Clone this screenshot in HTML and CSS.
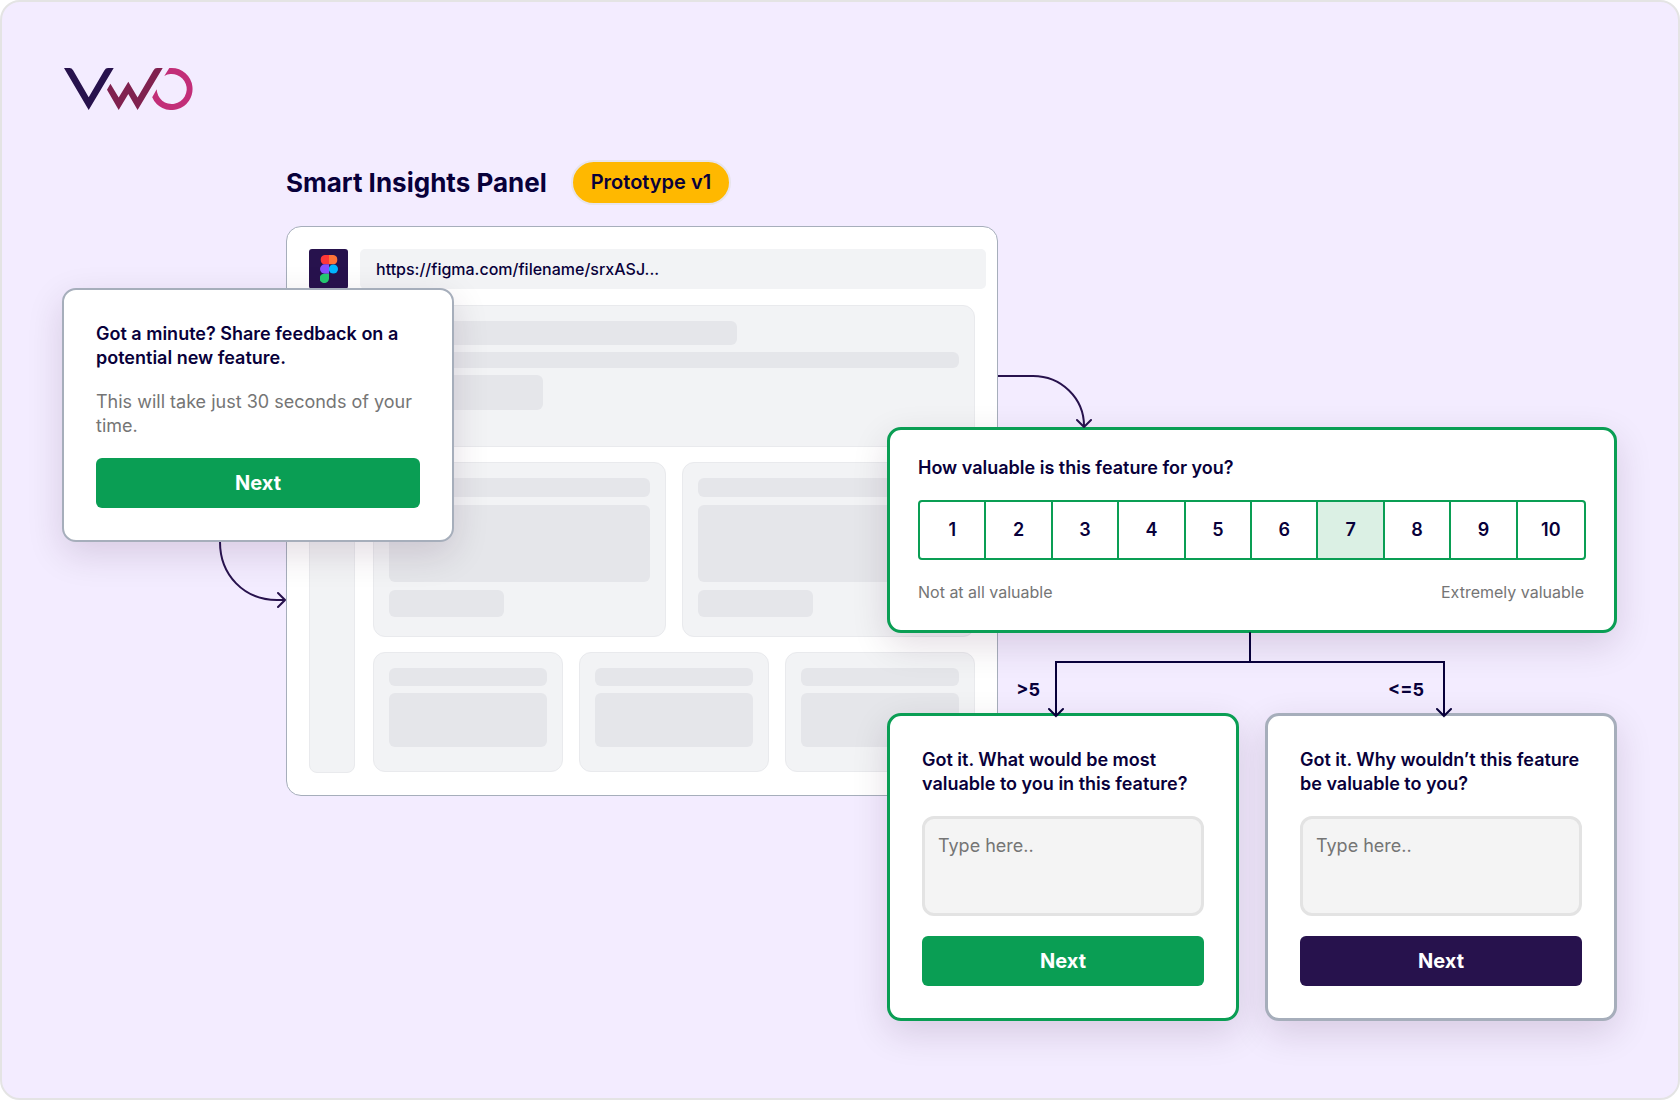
FILE: index.html
```html
<!DOCTYPE html>
<html lang="en">
<head>
    <meta charset="UTF-8">
    <meta name="viewport" content="width=device-width, initial-scale=1.0">
    <title>Smart Insights Panel</title>
    <link rel="stylesheet" href="styles.css">
</head>
<body>

    <div class="page">

        <a class="logo" href="#" aria-label="VWO">
            <svg width="129" height="42" viewBox="0 0 129 42">
                <path fill="#27124d" d="M0 0H5.5Q7.8 0 9.1 2.2L24.7 29.2 40.3 2.4Q41.7 0 44 0H49.7L24.7 41.9Z"/>
                <path fill="#80214f" d="M43 21.7L46.4 15.8 54.7 29.6 64.3 13.7 73.6 29.6 89.4 2.4Q90.8 0 93 0H98.7L73.6 41.9 64.3 25.9 54.7 41.9Z"/>
                <path fill="#c22e78" d="M105.3 0H107.7A21 21 0 1 1 88.2 29.2L92.7 21.3A15 15 0 1 0 100.3 8Z"/>
            </svg>
        </a>

        <main class="board">

            <header class="heading">
                <h1>Smart Insights Panel</h1>
                <span class="badge">Prototype v1</span>
            </header>

            <!-- Prototype preview -->
            <section class="browser">
                <div class="browser-bar">
                    <span class="figma">
                        <svg width="18" height="28" viewBox="0 0 18 28">
                            <path fill="#ff3737" d="M9 0H4.7a4.7 4.7 0 0 0 0 9.3H9z"/>
                            <path fill="#ff7237" d="M9 0h4.3a4.7 4.7 0 0 1 0 9.3H9z"/>
                            <path fill="#874fff" d="M9 9.3H4.7a4.7 4.7 0 0 0 0 9.4H9z"/>
                            <circle fill="#00b6ff" cx="13.4" cy="14" r="4.6"/>
                            <path fill="#24cb71" d="M9 18.7H4.7A4.7 4.7 0 1 0 9 23.3z"/>
                        </svg>
                    </span>
                    <a class="url" href="#">https://figma.com/filename/srxASJ...</a>
                </div>

                <div class="wireframe">
                    <div class="wire sidebar"></div>
                    <div class="content">
                        <div class="wire hero">
                            <div class="bone hero-title"></div>
                            <div class="bone hero-text"></div>
                            <div class="bone hero-button"></div>
                        </div>
                        <div class="row two">
                            <div class="wire tall">
                                <div class="bone line"></div>
                                <div class="bone block"></div>
                                <div class="bone tag"></div>
                            </div>
                            <div class="wire tall">
                                <div class="bone line"></div>
                                <div class="bone block"></div>
                                <div class="bone tag"></div>
                            </div>
                        </div>
                        <div class="row three">
                            <div class="wire short">
                                <div class="bone line"></div>
                                <div class="bone block"></div>
                            </div>
                            <div class="wire short">
                                <div class="bone line"></div>
                                <div class="bone block"></div>
                            </div>
                            <div class="wire short">
                                <div class="bone line"></div>
                                <div class="bone block"></div>
                            </div>
                        </div>
                    </div>
                </div>
            </section>

            <!-- Survey intro -->
            <form class="card intro">
                <h2>Got a minute? Share feedback on a potential new feature.</h2>
                <p>This will take just 30 seconds of your time.</p>
                <button class="btn" type="button">Next</button>
            </form>

            <svg class="arrow arrow-in" width="67" height="68" viewBox="0 0 67 68">
                <path d="M1 0C1 33 25 58 58 58H66M59 51L66 58L59 65"/>
            </svg>

            <svg class="arrow arrow-out" width="96" height="54" viewBox="0 0 96 54">
                <path d="M0 2H35C63 2 86 24 86 52M79 46L86 53L93 46"/>
            </svg>

            <!-- Survey questions -->
            <div class="flow">
                <form class="card question">
                    <h2 id="rating-title">How valuable is this feature for you?</h2>
                    <div class="scale" role="radiogroup" aria-labelledby="rating-title">
                        <label><input type="radio" name="rating" value="1"><span>1</span></label>
                        <label><input type="radio" name="rating" value="2"><span>2</span></label>
                        <label><input type="radio" name="rating" value="3"><span>3</span></label>
                        <label><input type="radio" name="rating" value="4"><span>4</span></label>
                        <label><input type="radio" name="rating" value="5"><span>5</span></label>
                        <label><input type="radio" name="rating" value="6"><span>6</span></label>
                        <label><input type="radio" name="rating" value="7" checked><span>7</span></label>
                        <label><input type="radio" name="rating" value="8"><span>8</span></label>
                        <label><input type="radio" name="rating" value="9"><span>9</span></label>
                        <label><input type="radio" name="rating" value="10"><span>10</span></label>
                    </div>
                    <div class="legend">
                        <span>Not at all valuable</span>
                        <span>Extremely valuable</span>
                    </div>
                </form>

                <div class="branch">
                    <svg width="404" height="84" viewBox="0 0 404 84">
                        <path d="M202 0V29M8 83V29H396V83M1 76L8 83L15 76M389 76L396 83L403 76"/>
                    </svg>
                    <span class="condition high">&gt;5</span>
                    <span class="condition low">&lt;=5</span>
                </div>

                <div class="answers">
                    <form class="card answer">
                        <h2><label for="answer-high">Got it. What would be most valuable to you in this feature?</label></h2>
                        <textarea id="answer-high" placeholder="Type here.."></textarea>
                        <button class="btn" type="button">Next</button>
                    </form>
                    <form class="card answer grey">
                        <h2><label for="answer-low">Got it. Why wouldn’t this feature be valuable to you?</label></h2>
                        <textarea id="answer-low" placeholder="Type here.."></textarea>
                        <button class="btn dark" type="button">Next</button>
                    </form>
                </div>
            </div>

        </main>
    </div>

</body>
</html>
```
FILE: styles.css
```css
* {
    box-sizing: border-box;
}

body {
    margin: 0;
    font-family: Inter, "Liberation Sans", sans-serif;
    font-size: 18px;
    line-height: 24px;
    color: #08003a;
    background-color: #fff;
}

h1, h2, p {
    margin: 0;
}

svg {
    display: block;
}

.page {
    min-height: 100vh;
    padding: 66px 61px 76px 60px;
    border: 2px solid #e4e4e4;
    border-radius: 20px;
    background-color: #f3ecff;
}

.logo {
    display: inline-block;
    margin-left: 2px;
    vertical-align: top;
}

/* The cards share the columns so that they lap over the browser */
.board {
    display: grid;
    grid-template-columns: 224fr 601fr 111fr 619fr;
    align-items: start;
    margin-top: 50px;
}

.heading {
    grid-area: 1 / 2 / 2 / 5;
    display: flex;
    align-items: center;
    gap: 24px;
    margin-bottom: 21px;
}

h1 {
    font-size: 26px;
    line-height: 32px;
    font-weight: 700;
}

.badge {
    padding: 8px 18px;
    border: 2px solid #e7e4ec;
    border-radius: 23px;
    font-size: 20px;
    line-height: 25px;
    font-weight: 600;
    background-color: #ffb800;
}

/* Browser */
.browser {
    grid-area: 2 / 2 / 3 / 4;
    padding: 22px;
    border: 1px solid #a6aebb;
    border-radius: 15px;
    background-color: #fff;
}

.browser-bar {
    display: flex;
    gap: 12px;
    margin-right: -11px;
}

.figma {
    display: flex;
    align-items: center;
    justify-content: center;
    width: 39px;
    height: 40px;
    border-radius: 3px;
    background-color: #27124d;
}

.url {
    flex: 1;
    padding: 8px 16px;
    border-radius: 5px;
    font-size: 16px;
    font-weight: 500;
    color: inherit;
    text-decoration: none;
    background-color: #f2f3f5;
}

.wireframe {
    display: flex;
    gap: 18px;
    margin-top: 16px;
}

.wire {
    border: 1px solid #e9eaed;
    border-radius: 12px;
    background-color: #f2f3f5;
}

.sidebar {
    width: 46px;
    border-radius: 8px;
}

.content {
    flex: 1;
    display: flex;
    flex-direction: column;
    gap: 15px;
    padding-bottom: 1px;
}

.row {
    display: grid;
    gap: 16px;
}

.two {
    grid-template-columns: 1fr 1fr;
}

.three {
    grid-template-columns: 1fr 1fr 1fr;
}

.hero, .tall, .short {
    display: flex;
    flex-direction: column;
    gap: 8px;
    padding: 15px;
}

.hero {
    height: 142px;
    gap: 7px;
}

.tall {
    height: 175px;
}

.short {
    height: 120px;
    gap: 7px;
}

.bone {
    border-radius: 6px;
    background-color: #e5e6ea;
}

.hero-title {
    width: 61%;
    height: 24px;
}

.hero-text {
    height: 16px;
}

.hero-button {
    width: 27%;
    height: 35px;
}

.line {
    height: 19px;
}

.tall .block {
    height: 77px;
}

.tag {
    width: 44%;
    height: 27px;
}

.short .line {
    height: 18px;
}

.short .block {
    height: 54px;
}

/* Cards */
.card {
    border: 3px solid #0a9e54;
    border-radius: 14px;
    background-color: #fff;
    box-shadow: 0 12px 36px rgba(50, 10, 50, 0.14);
}

h2 {
    font-size: 18px;
    line-height: 24px;
    font-weight: 600;
}

.btn {
    display: block;
    width: 100%;
    height: 50px;
    border: none;
    border-radius: 6px;
    font-family: inherit;
    font-size: 20px;
    font-weight: 700;
    color: #fff;
    background-color: #0a9e54;
    cursor: pointer;
}

.btn.dark {
    background-color: #27124d;
}

.intro {
    grid-area: 2 / 1 / 3 / 3;
    width: 392px;
    margin-top: 62px;
    padding: 32px;
    border: 2px solid #a6aebb;
}

.intro p {
    margin: 20px 0;
    color: #757575;
}

.arrow, .branch svg {
    fill: none;
    stroke: #27124d;
    stroke-width: 2;
    stroke-linecap: round;
}

.arrow-in {
    grid-area: 2 / 1 / 3 / 2;
    justify-self: end;
    margin-top: 316px;
}

.arrow-out {
    grid-area: 2 / 4 / 3 / 5;
    z-index: 1;
    margin-top: 148px;
}

.flow {
    grid-area: 2 / 3 / 3 / 5;
    margin-top: 201px;
}

.question {
    padding: 26px 28px;
}

.scale {
    display: grid;
    grid-template-columns: repeat(10, 1fr);
    margin: 20px 0;
    border: 2px solid #0a9e54;
    border-radius: 4px;
}

.scale label {
    position: relative;
    height: 56px;
    border-right: 2px solid #0a9e54;
    font-weight: 600;
    text-align: center;
    cursor: pointer;
}

.scale label:last-child {
    border-right: none;
}

.scale input {
    position: absolute;
    opacity: 0;
}

.scale span {
    display: block;
    line-height: 56px;
}

.scale input:checked + span {
    background-color: #dbf0e4;
}

.legend {
    display: flex;
    justify-content: space-between;
    padding-right: 2px;
    font-size: 16px;
    color: #757575;
}

.branch {
    position: relative;
    z-index: 1;
    display: flex;
    justify-content: center;
    height: 80px;
    margin-right: 4px;
}

.branch svg {
    overflow: visible;
    stroke: #08003a;
}

.condition {
    position: absolute;
    top: 45px;
    font-weight: 700;
}

.high {
    right: calc(50% + 210px);
}

.low {
    left: calc(50% + 138px);
}

.answers {
    display: grid;
    grid-template-columns: 1fr 1fr;
    gap: 26px;
}

.answer {
    padding: 32px;
}

.answer.grey {
    border-color: #a6aebb;
}

textarea {
    display: block;
    width: 100%;
    height: 100px;
    margin: 20px 0;
    padding: 15px 13px;
    border: 3px solid #e3e3e3;
    border-radius: 12px;
    font-family: inherit;
    font-size: 18px;
    line-height: 24px;
    background-color: #f4f4f4;
    resize: none;
}

textarea::placeholder {
    color: #757575;
}
```
